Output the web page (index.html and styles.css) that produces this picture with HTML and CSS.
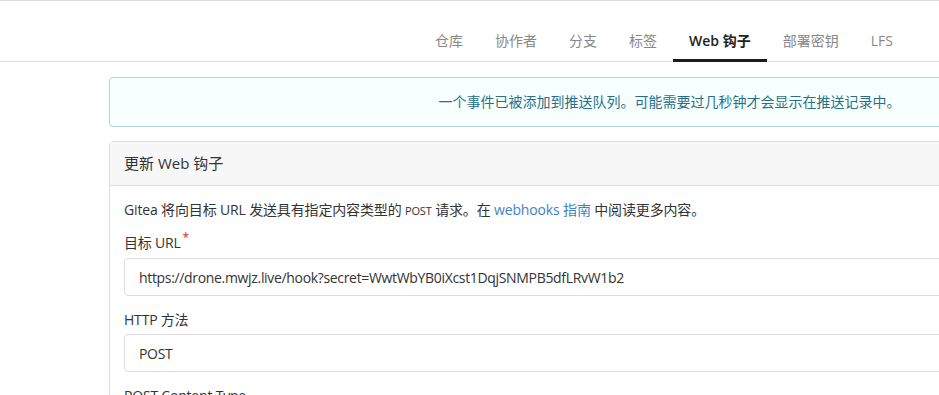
FILE: index.html
```html
<!DOCTYPE html>
<html lang="zh-CN">
<head>
  <meta charset="UTF-8">
  <meta name="viewport" content="width=device-width, initial-scale=1.0">
  <title>更新 Web 钩子</title>
  <link rel="stylesheet" href="styles.css">
</head>
<body>
  <div class="page">
    <div class="header">
      <div class="tabs">
        <a class="tab">仓库</a>
        <a class="tab">协作者</a>
        <a class="tab">分支</a>
        <a class="tab">标签</a>
        <a class="tab active">Web 钩子</a>
        <a class="tab">部署密钥</a>
        <a class="tab">LFS</a>
      </div>
    </div>

    <div class="container">
      <div class="message">一个事件已被添加到推送队列。可能需要过几秒钟才会显示在推送记录中。</div>

      <div class="segment">
        <h4 class="segment-header">更新 Web 钩子</h4>
        <div class="segment-body">
          <p class="help">Gitea 将向目标 URL 发送具有指定内容类型的 <code>POST</code> 请求。在 <a href="#">webhooks 指南</a> 中阅读更多内容。</p>

          <div class="field">
            <label class="required">目标 URL</label>
            <input type="text" value="https://drone.mwjz.live/hook?secret=WwtWbYB0iXcst1DqjSNMPB5dfLRvW1b2">
          </div>

          <div class="field">
            <label>HTTP 方法</label>
            <input type="text" value="POST">
          </div>

          <div class="field">
            <label>POST Content Type</label>
            <input type="text" value="application/json">
          </div>
        </div>
      </div>
    </div>
  </div>
</body>
</html>
```

FILE: styles.css
```css
body {
  margin: 0;
  font-family: 'Open Sans', 'Noto Sans CJK SC', sans-serif;
  font-size: 14px;
  color: #333;
  background-color: #fff;
  overflow: hidden;
}

.page {
  width: 1335px;
}

.header {
  border-top: 1px solid #ddd;
  border-bottom: 1px solid #ddd;
  padding: 19px 7px 0 0;
  display: flex;
  justify-content: center;
}

.tabs {
  display: flex;
}

.tab {
  padding: 12px 16px 10px;
  line-height: 17px;
  color: #888;
  border-bottom: 3px solid transparent;
  margin-bottom: -1px;
}

.tab.active {
  color: #222;
  font-weight: 600;
  border-bottom-color: #1b1c1d;
}

.container {
  width: 1117px;
  margin: 15px auto 0;
}

.message {
  background-color: #f8ffff;
  border: 1px solid #a9d5de;
  border-radius: 4px;
  color: #276f86;
  text-align: center;
  padding: 14px 19px 14px 23px;
  line-height: 20px;
  margin-bottom: 14px;
}

.segment {
  border: 1px solid #ddd;
  border-radius: 4px;
}

.segment-header {
  margin: 0;
  background-color: #f7f7f7;
  border-bottom: 1px solid #ddd;
  padding: 11px 14px;
  font-size: 15px;
  font-weight: normal;
  line-height: 21px;
  color: #333;
}

.segment-body {
  padding: 14px;
}

.help {
  margin: 0 0 13px;
  line-height: 20px;
  letter-spacing: -0.15px;
}

.help code {
  font-family: 'Open Sans', sans-serif;
  font-size: 11px;
}

.help a {
  color: #4183c4;
  text-decoration: none;
}

.field {
  margin-bottom: 15px;
}

.field label {
  display: block;
  line-height: 18px;
  margin-bottom: 5px;
  color: #333;
  letter-spacing: -0.2px;
}

.field label.required::after {
  content: '*';
  color: #db2828;
  margin-left: 2px;
  font-size: 12px;
  position: relative;
  top: -6px;
}

.field input {
  display: block;
  box-sizing: border-box;
  width: 100%;
  height: 38px;
  padding: 9px 14px;
  border: 1px solid #ddd;
  border-radius: 4px;
  font-family: 'Open Sans', 'Noto Sans CJK SC', sans-serif;
  font-size: 14px;
  letter-spacing: -0.33px;
  color: #333;
  line-height: 18px;
}
```
